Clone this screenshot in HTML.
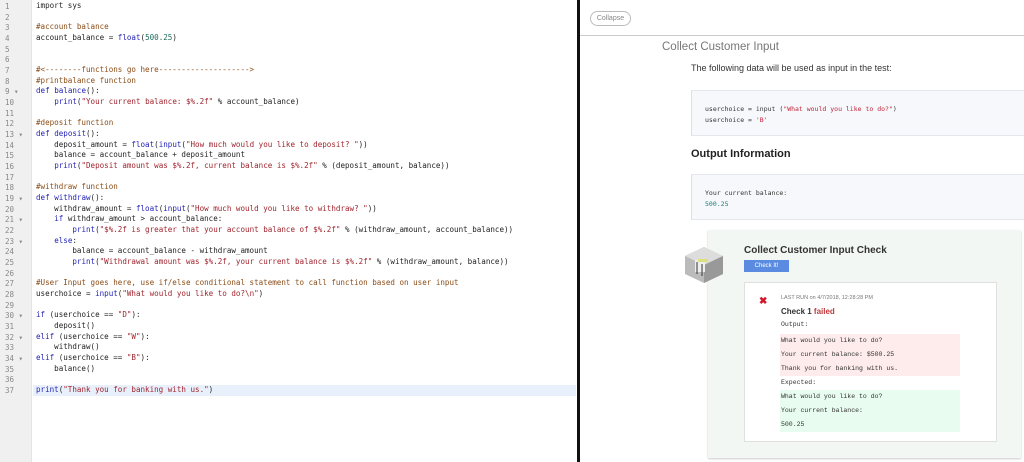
<!DOCTYPE html>
<html><head><meta charset="utf-8"><style>
*{margin:0;padding:0;box-sizing:border-box}
body{width:1024px;height:462px;overflow:hidden;background:#fff;position:relative;font-family:"Liberation Sans",sans-serif}
#ed{position:absolute;left:0;top:0;width:577px;height:462px;background:#fff}
#gut{position:absolute;left:0;top:0;width:32px;height:462px;background:#f0f0f0;border-right:1px solid #e4e4e4}
.ln{position:absolute;left:0;width:32px;font:7.5px "DejaVu Sans Mono",monospace;color:#888;padding-left:5px}
.cl{position:absolute;left:36px;font:7.55px "DejaVu Sans Mono",monospace;color:#222;white-space:pre;line-height:10px}
.c{color:#8a4c17}.k{color:#1d1db4}.s{color:#a0242d}.n{color:#1d6a5a}
#div{position:absolute;left:577px;top:0;width:3px;height:462px;background:#111}
.mono{font-family:"Liberation Mono",monospace}
</style></head><body>
<div id="ed"><div id="gut"></div>
<div style="position:absolute;left:33px;top:385px;width:543px;height:11px;background:#e8f0fb"></div>
</div>
<div id="code"></div>
<script>
var L=[
['import sys'],[''],['<span class=c>#account balance</span>'],['account_balance = <span class=k>float</span>(<span class=n>500.25</span>)'],[''],[''],
['<span class=c>#&lt;--------functions go here--------------------&gt;</span>'],['<span class=c>#printbalance function</span>'],['<span class=k>def</span> <span class=k>balance</span>():',1],
['    <span class=k>print</span>(<span class=s>"Your current balance: $%.2f"</span> % account_balance)'],[''],['<span class=c>#deposit function</span>'],['<span class=k>def</span> <span class=k>deposit</span>():',1],
['    deposit_amount = <span class=k>float</span>(<span class=k>input</span>(<span class=s>"How much would you like to deposit? "</span>))'],
['    balance = account_balance + deposit_amount'],
['    <span class=k>print</span>(<span class=s>"Deposit amount was $%.2f, current balance is $%.2f"</span> % (deposit_amount, balance))'],[''],
['<span class=c>#withdraw function</span>'],['<span class=k>def</span> <span class=k>withdraw</span>():',1],
['    withdraw_amount = <span class=k>float</span>(<span class=k>input</span>(<span class=s>"How much would you like to withdraw? "</span>))'],
['    <span class=k>if</span> withdraw_amount &gt; account_balance:',1],
['        <span class=k>print</span>(<span class=s>"$%.2f is greater that your account balance of $%.2f"</span> % (withdraw_amount, account_balance))'],
['    <span class=k>else</span>:',1],['        balance = account_balance - withdraw_amount'],
['        <span class=k>print</span>(<span class=s>"Withdrawal amount was $%.2f, your current balance is $%.2f"</span> % (withdraw_amount, balance))'],[''],
['<span class=c>#User Input goes here, use if/else conditional statement to call function based on user input</span>'],
['userchoice = <span class=k>input</span>(<span class=s>"What would you like to do?\\n"</span>)'],[''],
['<span class=k>if</span> (userchoice == <span class=s>"D"</span>):',1],['    deposit()'],['<span class=k>elif</span> (userchoice == <span class=s>"W"</span>):',1],['    withdraw()'],
['<span class=k>elif</span> (userchoice == <span class=s>"B"</span>):',1],['    balance()'],[''],['<span class=k>print</span>(<span class=s>"Thank you for banking with us."</span>)']];
var h='';for(var i=0;i<L.length;i++){var y=1+i*10.67;
h+='<div class=ln style="top:'+(y+1)+'px">'+(i+1)+(L[i][1]?' ▾':'')+'</div><div class=cl style="top:'+y+'px">'+L[i][0]+'</div>';}
document.getElementById('code').innerHTML=h;
</script>
<div id="div"></div>
<div style="position:absolute;left:590px;top:11px;width:41px;height:15px;border:1px solid #bbb;border-radius:8px;font-size:7px;color:#888;text-align:center;line-height:13px">Collapse</div>
<div style="position:absolute;left:580px;top:35px;width:444px;height:1px;background:#ccc"></div>
<div style="position:absolute;left:662px;top:41px;font-size:11.5px;color:#777">Collect Customer Input</div>
<div style="position:absolute;left:691px;top:63px;font-size:9px;color:#333">The following data will be used as input in the test:</div>
<div style="position:absolute;left:691px;top:90px;width:333px;height:46px;background:#f6f8fb;border-left:1px solid #dde;border-top:1px solid #e4e8ee;border-bottom:1px solid #e4e8ee;padding:13px 0 0 13px;font:6.5px 'DejaVu Sans Mono',monospace;line-height:11px;color:#333">userchoice = input (<span style="color:#c0243a">"What would you like to do?"</span>)<br>userchoice = <span style="color:#c0243a">'B'</span></div>
<div style="position:absolute;left:691px;top:148px;font-size:11px;font-weight:bold;color:#222">Output Information</div>
<div style="position:absolute;left:691px;top:174px;width:333px;height:46px;background:#f6f8fb;border-left:1px solid #dde;border-top:1px solid #e4e8ee;border-bottom:1px solid #e4e8ee;padding:13px 0 0 13px;font:6.5px 'DejaVu Sans Mono',monospace;line-height:11px;color:#333">Your current balance:<br><span style="color:#1d7a7a">500.25</span></div>
<div style="position:absolute;left:708px;top:230px;width:313px;height:228px;background:#f3f7f4;box-shadow:0 1px 2px #ccc"></div>
<svg style="position:absolute;left:683px;top:246px" width="42" height="38" viewBox="0 0 42 38"><polygon points="21,1 40,10 40,28 21,37 2,28 2,10" fill="#bbb"/><polygon points="21,1 40,10 21,19 2,10" fill="#ddd"/><polygon points="21,19 40,10 40,28 21,37" fill="#999"/><rect x="12" y="14" width="10" height="12" fill="#eee"/><line x1="14" y1="16" x2="14" y2="28" stroke="#333"/><line x1="19" y1="18" x2="19" y2="30" stroke="#333"/><rect x="15" y="13" width="10" height="3" fill="#dde080"/></svg>
<div style="position:absolute;left:744px;top:245px;font-size:10px;font-weight:bold;color:#333">Collect Customer Input Check</div>
<div style="position:absolute;left:744px;top:260px;width:45px;height:12px;background:#5b8be0;color:#fff;font-size:6px;text-align:center;line-height:12px">Check It!</div>
<div style="position:absolute;left:744px;top:282px;width:253px;height:160px;background:#fff;border:1px solid #e0e0e0"></div>
<div style="position:absolute;left:759px;top:296px;color:#d0182b;font-size:10px;font-weight:bold">✖</div>
<div style="position:absolute;left:781px;top:295px;font-size:5.5px;color:#777">LAST RUN on 4/7/2018, 12:28:28 PM</div>
<div style="position:absolute;left:781px;top:307px;font-size:8px;font-weight:bold;color:#333">Check 1 <span style="color:#c0393b">failed</span></div>
<div class="mono" style="position:absolute;left:781px;top:321px;font-size:6.5px;color:#333">Output:</div>
<div class="mono" style="position:absolute;left:780px;top:334px;width:180px;height:42px;background:#fdeceb;padding-left:1px;font-size:6.5px;line-height:14px;color:#333">What would you like to do?<br>Your current balance: $500.25<br>Thank you for banking with us.</div>
<div class="mono" style="position:absolute;left:781px;top:379px;font-size:6.5px;color:#333">Expected:</div>
<div class="mono" style="position:absolute;left:780px;top:390px;width:180px;height:42px;background:#e8fcef;padding-left:1px;font-size:6.5px;line-height:14px;color:#333">What would you like to do?<br>Your current balance:<br>500.25</div>
</body></html>
